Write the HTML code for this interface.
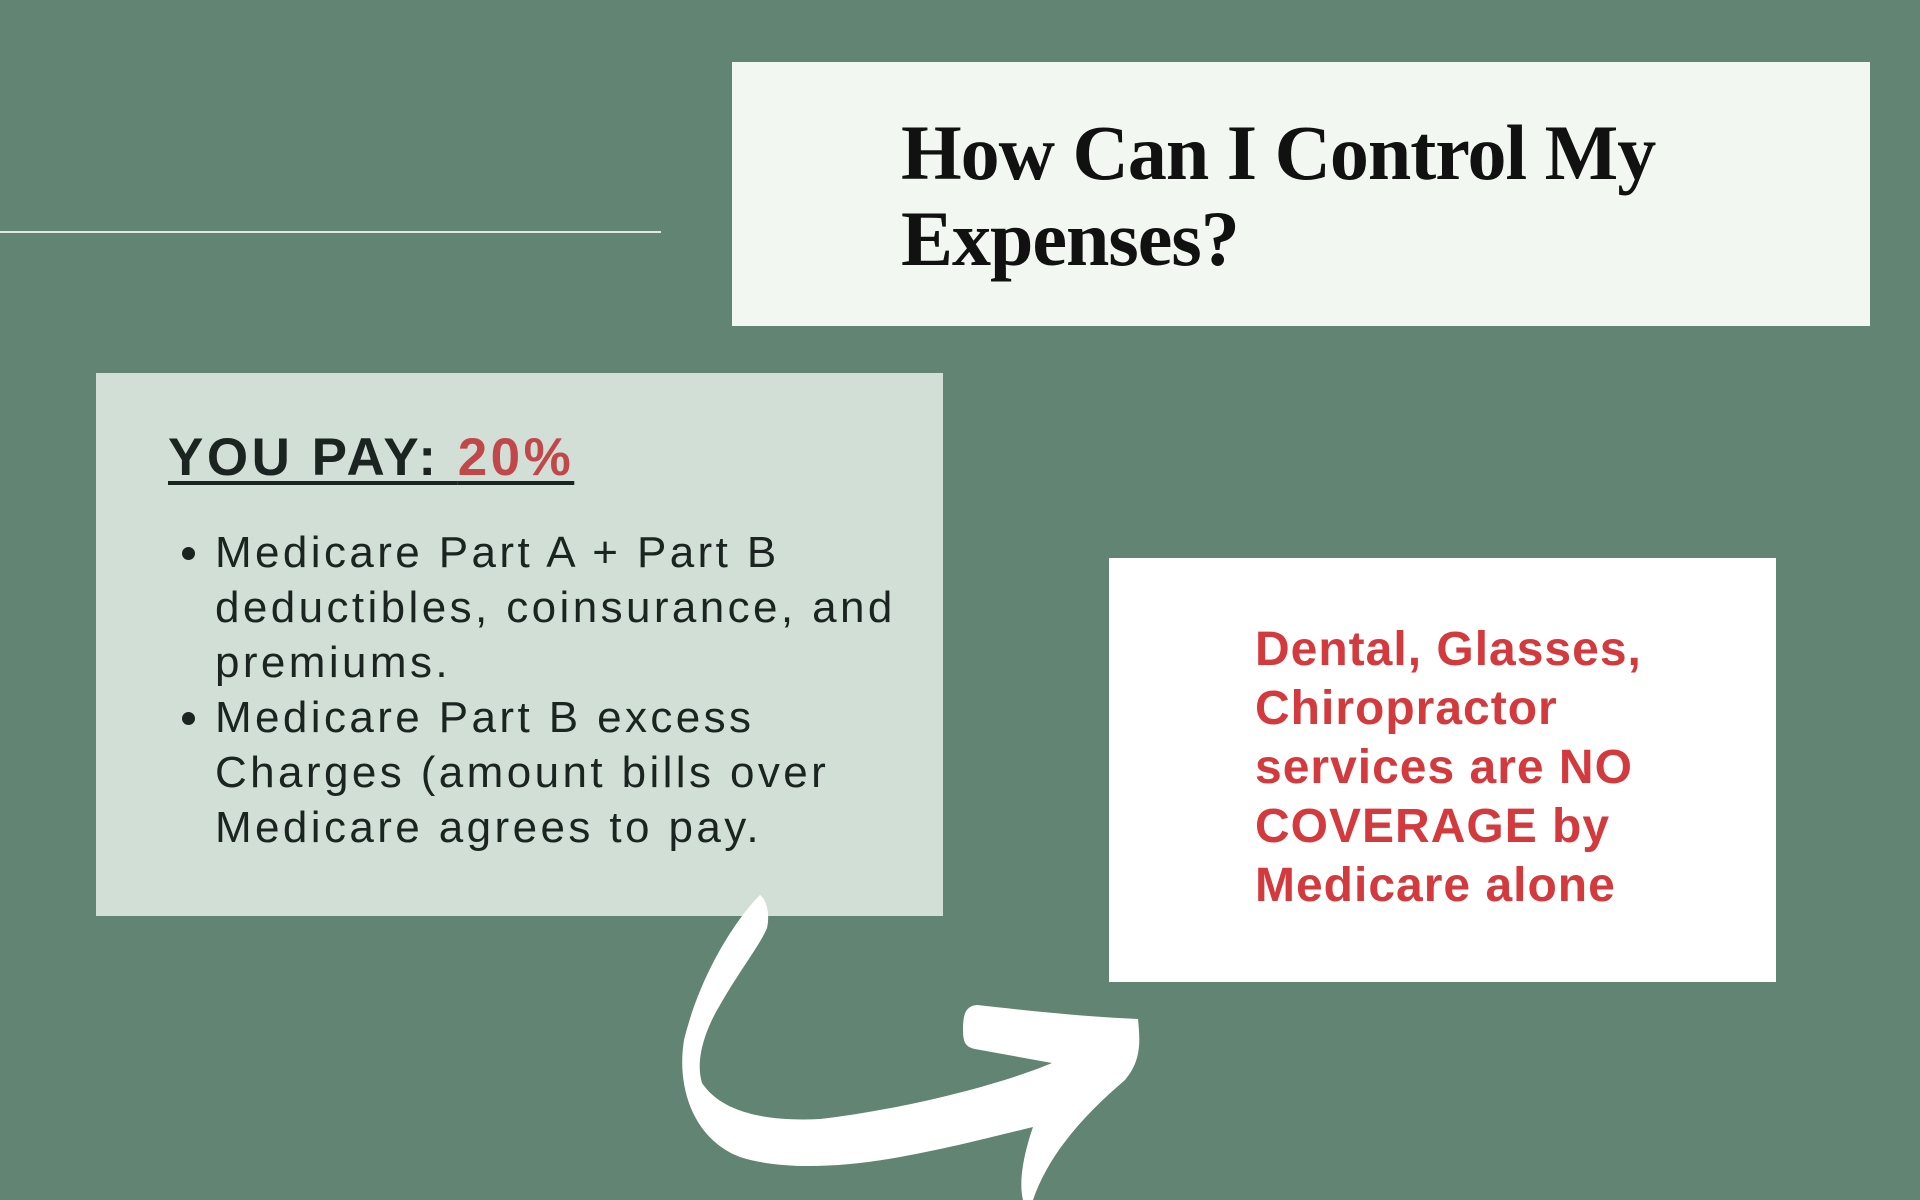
<!DOCTYPE html>
<html><head><meta charset="utf-8"><style>
html,body{margin:0;padding:0}
body{width:1920px;height:1200px;background:#628473;position:relative;overflow:hidden;font-family:"Liberation Sans",sans-serif}
.line{position:absolute;left:0;top:231px;width:661px;height:2px;background:#dfe9e2}
.title{position:absolute;left:732px;top:62px;width:1138px;height:264px;background:#f2f7f1}
.title div{position:absolute;left:169px;top:48px;font-family:"Liberation Serif",serif;font-weight:bold;font-size:78px;line-height:86px;color:#111;letter-spacing:-1px}
.left{position:absolute;left:96px;top:373px;width:847px;height:543px;background:#d2dfd7}
.pay{position:absolute;left:72px;top:54px;font-weight:bold;font-size:53px;color:#1b2420;text-decoration:underline;text-decoration-thickness:4px;text-underline-offset:6px;letter-spacing:3.5px;white-space:nowrap}
.pay span{color:#c0484a}
ul{position:absolute;left:48px;top:152px;margin:0;padding:0 0 0 71px;font-size:44px;line-height:55px;color:#1b2420;width:720px;letter-spacing:3.4px}
.right{position:absolute;left:1109px;top:558px;width:667px;height:424px;background:#fff}
.red{position:absolute;left:146px;top:62px;font-weight:bold;font-size:48px;line-height:59px;color:#d33a3e;letter-spacing:1px;white-space:nowrap}
svg{position:absolute;left:0;top:0}
</style></head><body>
<div class="line"></div>
<div class="title"><div>How Can I Control My<br>Expenses?</div></div>
<div class="left">
<div class="pay">YOU PAY: <span>20%</span></div>
<ul><li>Medicare Part A + Part B deductibles, coinsurance, and premiums.</li><li>Medicare Part B excess<br>Charges (amount bills over Medicare agrees to pay.</li></ul>
</div>
<div class="right"><div class="red">Dental, Glasses,<br>Chiropractor<br>services are NO<br>COVERAGE by<br>Medicare alone</div></div>
<svg width="1920" height="1200"><path fill="#fff" d="M760 895 C735 920 700 975 684 1040 C676 1090 695 1140 740 1157 C780 1170 840 1168 900 1157 C950 1148 1000 1135 1033 1127 C1025 1150 1018 1180 1023 1200 L1033 1200 C1050 1150 1090 1110 1125 1080 C1142 1060 1140 1040 1138 1019 C1090 1017 1040 1012 977 1005 C965 1006 963 1015 963 1030 C963 1043 966 1047 975 1049 L1052 1063 C1000 1085 900 1110 820 1119 C760 1122 720 1110 702 1083 C695 1060 705 1030 720 1005 C740 970 760 945 767 928 C770 915 767 900 760 895Z"/></svg>
</body></html>
